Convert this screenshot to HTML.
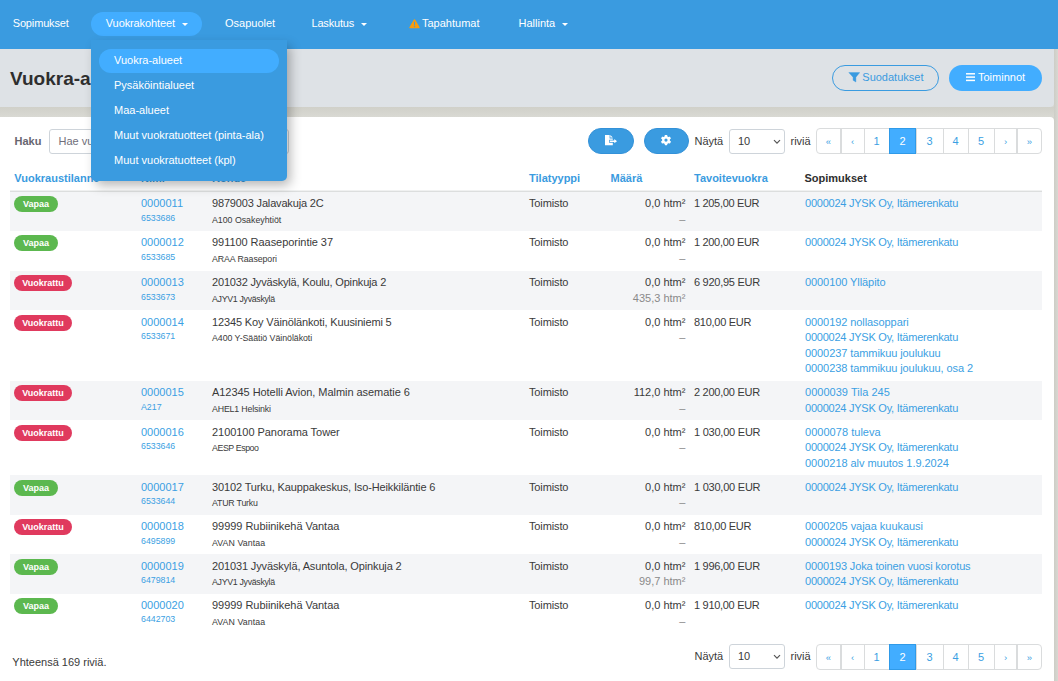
<!DOCTYPE html>
<html><head><meta charset="utf-8"><title>Vuokra-alueet</title>
<style>
html,body{margin:0;padding:0;}
body{width:1058px;height:681px;overflow:hidden;position:relative;background:#d5d5cf;font-family:"Liberation Sans", sans-serif;}
div{box-sizing:border-box;}
.caret{position:absolute;width:0;height:0;border-left:3px solid transparent;border-right:3px solid transparent;border-top:3px solid #fff;}
</style></head><body>

<div style="position:absolute;left:0;top:49px;width:1054px;height:58px;background:#dee2e6;border-bottom-right-radius:4px;"></div>
<div style="position:absolute;left:0;top:107px;width:1058px;height:10px;background:linear-gradient(#d0d0c9,#d9d9d3);"></div>
<div style="position:absolute;left:0;top:117px;width:1054px;height:600px;background:#fff;border-top-right-radius:4px;"></div>
<div style="position:absolute;left:1054px;top:49px;width:4px;height:633px;background:linear-gradient(90deg,#cdcdc6,#d8d8d2);"></div>
<div style="position:absolute;left:10.00px;top:64.92px;font-size:19px;line-height:27px;color:#2e2e2e;font-weight:bold;white-space:nowrap;">Vuokra-alueet</div>
<div style="position:absolute;left:832px;top:65px;width:107px;height:26px;border:1px solid #3a9be0;border-radius:13px;"></div>
<svg style="position:absolute;left:848px;top:72px" width="12" height="11" viewBox="0 0 12 11"><path d="M0.8 0.6 H11.7 L7.9 5.2 V10 L5.1 8.3 V5.2 Z" fill="#3a9be0" stroke="#3a9be0" stroke-width="0.4" stroke-linejoin="round"/></svg>
<div style="position:absolute;left:862.30px;top:70.19px;font-size:11px;line-height:15px;color:#3a9be0;font-weight:normal;white-space:nowrap;">Suodatukset</div>
<div style="position:absolute;left:949px;top:65px;width:93px;height:26px;background:#42adff;border-radius:13px;"></div>
<svg style="position:absolute;left:966px;top:68px" width="10" height="18" viewBox="0 0 10 18"><rect x="0" y="5.05" width="9" height="1.5" fill="#fff"/><rect x="0" y="8.35" width="9" height="1.5" fill="#fff"/><rect x="0" y="11.65" width="9" height="1.5" fill="#fff"/></svg>
<div style="position:absolute;left:978.00px;top:70.19px;font-size:11px;line-height:15px;color:#fff;font-weight:normal;white-space:nowrap;">Toiminnot</div>
<div style="position:absolute;left:14.50px;top:133.69px;font-size:11px;line-height:15px;color:#67656f;font-weight:bold;white-space:nowrap;">Haku</div>
<div style="position:absolute;left:49px;top:129px;width:240px;height:25px;border:1px solid #ced4da;border-radius:3px;background:#fff;"></div>
<div style="position:absolute;left:58.50px;top:133.69px;font-size:11px;line-height:15px;color:#6f6e7a;font-weight:normal;white-space:nowrap;">Hae vuokra-alueita</div>
<div style="position:absolute;left:588px;top:128px;width:46px;height:26px;background:#3a9be0;border-radius:13px;border:1px solid #3391d8;"></div>
<svg style="position:absolute;left:604px;top:134px" width="14" height="13" viewBox="0 0 14 13"><path d="M1 1 H5.6 V4.4 H8.8 V5.7 H5.1 V8.7 H8.8 V11.3 H1 Z" fill="#fff"/><path d="M6.3 1 L8.8 3.6 H6.3 Z" fill="#fff"/><path d="M5.8 6.6 H10.3 V5.1 L13 7.2 L10.3 9.3 V7.9 H5.8 Z" fill="#fff"/></svg>
<div style="position:absolute;left:644px;top:128px;width:45px;height:26px;background:#3a9be0;border-radius:13px;border:1px solid #3391d8;"></div>
<svg style="position:absolute;left:656px;top:130px" width="20" height="20" viewBox="0 0 20 20"><g transform="translate(10 10.1)" fill="#fff"><circle r="3.9"/><rect x="-1.25" y="-5.1" width="2.5" height="10.2" rx="0.4"/><rect x="-1.25" y="-5.1" width="2.5" height="10.2" rx="0.4" transform="rotate(60)"/><rect x="-1.25" y="-5.1" width="2.5" height="10.2" rx="0.4" transform="rotate(120)"/><circle r="1.6" fill="#3a9be0"/></g></svg>
<div style="position:absolute;left:694.50px;top:133.69px;font-size:11px;line-height:15px;color:#3a3a3a;font-weight:normal;white-space:nowrap;">Näytä</div><div style="position:absolute;left:729px;top:129px;width:56px;height:25px;border:1px solid #ced4da;border-radius:3px;background:#fff;"></div><div style="position:absolute;left:738.00px;top:133.69px;font-size:11px;line-height:15px;color:#3a3a3a;font-weight:normal;white-space:nowrap;">10</div><svg style="position:absolute;left:773px;top:138.5px" width="8" height="6" viewBox="0 0 8 6"><path d="M1 1.2 L4 4.2 L7 1.2" stroke="#555" stroke-width="1.2" fill="none"/></svg><div style="position:absolute;left:790.50px;top:133.69px;font-size:11px;line-height:15px;color:#3a3a3a;font-weight:normal;white-space:nowrap;">riviä</div><div style="position:absolute;left:816px;top:128px;width:226px;height:26px;border:1px solid #dadcdd;border-radius:4px;"></div><div style="position:absolute;left:816px;top:128.5px;width:25px;height:26px;line-height:26px;text-align:center;font-size:9.5px;color:#3b9fe3;">«</div><div style="position:absolute;left:840px;top:128px;width:2px;height:26px;background:#dadcdd;"></div><div style="position:absolute;left:841px;top:128.5px;width:23px;height:26px;line-height:26px;text-align:center;font-size:9.5px;color:#3b9fe3;">‹</div><div style="position:absolute;left:864px;top:128px;width:1px;height:26px;background:#dadcdd;"></div><div style="position:absolute;left:864px;top:128px;width:25px;height:26px;line-height:26px;text-align:center;font-size:11px;color:#3b9fe3;">1</div><div style="position:absolute;left:889px;top:128px;width:27px;height:26px;background:#42adff;border:1px solid #2f9ae8;"></div><div style="position:absolute;left:889px;top:128px;width:27px;height:26px;line-height:26px;text-align:center;font-size:11px;color:#fff;">2</div><div style="position:absolute;left:916px;top:128px;width:1px;height:26px;background:#dadcdd;"></div><div style="position:absolute;left:916px;top:128px;width:27px;height:26px;line-height:26px;text-align:center;font-size:11px;color:#3b9fe3;">3</div><div style="position:absolute;left:943px;top:128px;width:1px;height:26px;background:#dadcdd;"></div><div style="position:absolute;left:943px;top:128px;width:25px;height:26px;line-height:26px;text-align:center;font-size:11px;color:#3b9fe3;">4</div><div style="position:absolute;left:968px;top:128px;width:1px;height:26px;background:#dadcdd;"></div><div style="position:absolute;left:968px;top:128px;width:26px;height:26px;line-height:26px;text-align:center;font-size:11px;color:#3b9fe3;">5</div><div style="position:absolute;left:994px;top:128px;width:1px;height:26px;background:#dadcdd;"></div><div style="position:absolute;left:994px;top:128.5px;width:23px;height:26px;line-height:26px;text-align:center;font-size:9.5px;color:#3b9fe3;">›</div><div style="position:absolute;left:1016px;top:128px;width:2px;height:26px;background:#dadcdd;"></div><div style="position:absolute;left:1017px;top:128.5px;width:25px;height:26px;line-height:26px;text-align:center;font-size:9.5px;color:#3b9fe3;">»</div>
<div style="position:absolute;left:14.30px;top:170.69px;font-size:11px;line-height:15px;color:#3a9be0;font-weight:bold;white-space:nowrap;">Vuokraustilanne</div>
<div style="position:absolute;left:141.00px;top:170.69px;font-size:11px;line-height:15px;color:#3a9be0;font-weight:bold;white-space:nowrap;">Nimi</div>
<div style="position:absolute;left:212.00px;top:170.69px;font-size:11px;line-height:15px;color:#3a9be0;font-weight:bold;white-space:nowrap;">Kohde</div>
<div style="position:absolute;left:529.00px;top:170.69px;font-size:11px;line-height:15px;color:#3a9be0;font-weight:bold;white-space:nowrap;">Tilatyyppi</div>
<div style="position:absolute;left:610.60px;top:170.69px;font-size:11px;line-height:15px;color:#3a9be0;font-weight:bold;white-space:nowrap;">Määrä</div>
<div style="position:absolute;left:694.00px;top:170.69px;font-size:11px;line-height:15px;color:#3a9be0;font-weight:bold;white-space:nowrap;">Tavoitevuokra</div>
<div style="position:absolute;left:804.50px;top:170.69px;font-size:11px;line-height:15px;color:#2e2e2e;font-weight:bold;white-space:nowrap;">Sopimukset</div>
<div style="position:absolute;left:10px;top:190px;width:1032px;height:1px;background:#f0f1f1;"></div>
<div style="position:absolute;left:10px;top:191px;width:1032px;height:1px;background:#dcdede;"></div>
<div style="position:absolute;left:10px;top:192px;width:1032px;height:39px;background:#f4f5f7;"></div>
<div style="position:absolute;left:14px;top:196px;width:44px;height:16px;border-radius:8px;background:#5cb84f;color:#fff;font-size:9px;font-weight:bold;line-height:16px;text-align:center;">Vapaa</div>
<div style="position:absolute;left:141.00px;top:195.69px;font-size:11px;line-height:15px;color:#3b9fe3;font-weight:normal;white-space:nowrap;">0000011</div>
<div style="position:absolute;left:141.00px;top:211.95px;font-size:8.8px;line-height:12px;color:#3b9fe3;font-weight:normal;white-space:nowrap;">6533686</div>
<div style="position:absolute;left:212.00px;top:195.69px;font-size:11px;line-height:15px;color:#3a3a3a;font-weight:normal;white-space:nowrap;letter-spacing:-0.165px;">9879003 Jalavakuja 2C</div>
<div style="position:absolute;left:212.00px;top:213.95px;font-size:8.8px;line-height:12px;color:#3a3a3a;font-weight:normal;white-space:nowrap;letter-spacing:-0.016px;">A100 Osakeyhtiöt</div>
<div style="position:absolute;left:529.00px;top:195.69px;font-size:11px;line-height:15px;color:#3a3a3a;font-weight:normal;white-space:nowrap;letter-spacing:-0.130px;">Toimisto</div>
<div style="position:absolute;right:372.60px;top:195.69px;font-size:11px;line-height:15px;color:#3a3a3a;font-weight:normal;white-space:nowrap;">0,0 htm²</div>
<div style="position:absolute;right:372.60px;top:211.69px;font-size:11px;line-height:15px;color:#8a8a8a;font-weight:normal;white-space:nowrap;">–</div>
<div style="position:absolute;left:694.00px;top:195.69px;font-size:11px;line-height:15px;color:#3a3a3a;font-weight:normal;white-space:nowrap;letter-spacing:-0.325px;">1 205,00 EUR</div>
<div style="position:absolute;left:805.00px;top:195.69px;font-size:11px;line-height:15px;color:#3b9fe3;font-weight:normal;white-space:nowrap;letter-spacing:-0.241px;">0000024 JYSK Oy, Itämerenkatu</div>
<div style="position:absolute;left:14px;top:235px;width:44px;height:16px;border-radius:8px;background:#5cb84f;color:#fff;font-size:9px;font-weight:bold;line-height:16px;text-align:center;">Vapaa</div>
<div style="position:absolute;left:141.00px;top:234.69px;font-size:11px;line-height:15px;color:#3b9fe3;font-weight:normal;white-space:nowrap;">0000012</div>
<div style="position:absolute;left:141.00px;top:250.95px;font-size:8.8px;line-height:12px;color:#3b9fe3;font-weight:normal;white-space:nowrap;">6533685</div>
<div style="position:absolute;left:212.00px;top:234.69px;font-size:11px;line-height:15px;color:#3a3a3a;font-weight:normal;white-space:nowrap;letter-spacing:-0.048px;">991100 Raaseporintie 37</div>
<div style="position:absolute;left:212.00px;top:252.95px;font-size:8.8px;line-height:12px;color:#3a3a3a;font-weight:normal;white-space:nowrap;letter-spacing:-0.081px;">ARAA Raasepori</div>
<div style="position:absolute;left:529.00px;top:234.69px;font-size:11px;line-height:15px;color:#3a3a3a;font-weight:normal;white-space:nowrap;letter-spacing:-0.130px;">Toimisto</div>
<div style="position:absolute;right:372.60px;top:234.69px;font-size:11px;line-height:15px;color:#3a3a3a;font-weight:normal;white-space:nowrap;">0,0 htm²</div>
<div style="position:absolute;right:372.60px;top:250.69px;font-size:11px;line-height:15px;color:#8a8a8a;font-weight:normal;white-space:nowrap;">–</div>
<div style="position:absolute;left:694.00px;top:234.69px;font-size:11px;line-height:15px;color:#3a3a3a;font-weight:normal;white-space:nowrap;letter-spacing:-0.325px;">1 200,00 EUR</div>
<div style="position:absolute;left:805.00px;top:234.69px;font-size:11px;line-height:15px;color:#3b9fe3;font-weight:normal;white-space:nowrap;letter-spacing:-0.241px;">0000024 JYSK Oy, Itämerenkatu</div>
<div style="position:absolute;left:10px;top:271px;width:1032px;height:39px;background:#f4f5f7;"></div>
<div style="position:absolute;left:14px;top:275px;width:58px;height:16px;border-radius:8px;background:#e03a5e;color:#fff;font-size:9px;font-weight:bold;line-height:16px;text-align:center;">Vuokrattu</div>
<div style="position:absolute;left:141.00px;top:274.69px;font-size:11px;line-height:15px;color:#3b9fe3;font-weight:normal;white-space:nowrap;">0000013</div>
<div style="position:absolute;left:141.00px;top:290.95px;font-size:8.8px;line-height:12px;color:#3b9fe3;font-weight:normal;white-space:nowrap;">6533673</div>
<div style="position:absolute;left:212.00px;top:274.69px;font-size:11px;line-height:15px;color:#3a3a3a;font-weight:normal;white-space:nowrap;letter-spacing:-0.180px;">201032 Jyväskylä, Koulu, Opinkuja 2</div>
<div style="position:absolute;left:212.00px;top:292.95px;font-size:8.8px;line-height:12px;color:#3a3a3a;font-weight:normal;white-space:nowrap;letter-spacing:-0.313px;">AJYV1 Jyväskylä</div>
<div style="position:absolute;left:529.00px;top:274.69px;font-size:11px;line-height:15px;color:#3a3a3a;font-weight:normal;white-space:nowrap;letter-spacing:-0.130px;">Toimisto</div>
<div style="position:absolute;right:372.60px;top:274.69px;font-size:11px;line-height:15px;color:#3a3a3a;font-weight:normal;white-space:nowrap;">0,0 htm²</div>
<div style="position:absolute;right:372.60px;top:290.69px;font-size:11px;line-height:15px;color:#8a8a8a;font-weight:normal;white-space:nowrap;">435,3 htm²</div>
<div style="position:absolute;left:694.00px;top:274.69px;font-size:11px;line-height:15px;color:#3a3a3a;font-weight:normal;white-space:nowrap;letter-spacing:-0.275px;">6 920,95 EUR</div>
<div style="position:absolute;left:805.00px;top:274.69px;font-size:11px;line-height:15px;color:#3b9fe3;font-weight:normal;white-space:nowrap;letter-spacing:-0.077px;">0000100 Ylläpito</div>
<div style="position:absolute;left:14px;top:315px;width:58px;height:16px;border-radius:8px;background:#e03a5e;color:#fff;font-size:9px;font-weight:bold;line-height:16px;text-align:center;">Vuokrattu</div>
<div style="position:absolute;left:141.00px;top:314.69px;font-size:11px;line-height:15px;color:#3b9fe3;font-weight:normal;white-space:nowrap;">0000014</div>
<div style="position:absolute;left:141.00px;top:329.95px;font-size:8.8px;line-height:12px;color:#3b9fe3;font-weight:normal;white-space:nowrap;">6533671</div>
<div style="position:absolute;left:212.00px;top:314.69px;font-size:11px;line-height:15px;color:#3a3a3a;font-weight:normal;white-space:nowrap;letter-spacing:-0.141px;">12345 Koy Väinölänkoti, Kuusiniemi 5</div>
<div style="position:absolute;left:212.00px;top:331.95px;font-size:8.8px;line-height:12px;color:#3a3a3a;font-weight:normal;white-space:nowrap;letter-spacing:-0.043px;">A400 Y-Säätiö Väinöläkoti</div>
<div style="position:absolute;left:529.00px;top:314.69px;font-size:11px;line-height:15px;color:#3a3a3a;font-weight:normal;white-space:nowrap;letter-spacing:-0.130px;">Toimisto</div>
<div style="position:absolute;right:372.60px;top:314.69px;font-size:11px;line-height:15px;color:#3a3a3a;font-weight:normal;white-space:nowrap;">0,0 htm²</div>
<div style="position:absolute;right:372.60px;top:329.69px;font-size:11px;line-height:15px;color:#8a8a8a;font-weight:normal;white-space:nowrap;">–</div>
<div style="position:absolute;left:694.00px;top:314.69px;font-size:11px;line-height:15px;color:#3a3a3a;font-weight:normal;white-space:nowrap;letter-spacing:-0.273px;">810,00 EUR</div>
<div style="position:absolute;left:805.00px;top:314.69px;font-size:11px;line-height:15px;color:#3b9fe3;font-weight:normal;white-space:nowrap;letter-spacing:-0.079px;">0000192 nollasoppari</div>
<div style="position:absolute;left:805.00px;top:329.69px;font-size:11px;line-height:15px;color:#3b9fe3;font-weight:normal;white-space:nowrap;letter-spacing:-0.241px;">0000024 JYSK Oy, Itämerenkatu</div>
<div style="position:absolute;left:805.00px;top:345.69px;font-size:11px;line-height:15px;color:#3b9fe3;font-weight:normal;white-space:nowrap;letter-spacing:-0.083px;">0000237 tammikuu joulukuu</div>
<div style="position:absolute;left:805.00px;top:360.69px;font-size:11px;line-height:15px;color:#3b9fe3;font-weight:normal;white-space:nowrap;letter-spacing:-0.082px;">0000238 tammikuu joulukuu, osa 2</div>
<div style="position:absolute;left:10px;top:381px;width:1032px;height:39px;background:#f4f5f7;"></div>
<div style="position:absolute;left:14px;top:385px;width:58px;height:16px;border-radius:8px;background:#e03a5e;color:#fff;font-size:9px;font-weight:bold;line-height:16px;text-align:center;">Vuokrattu</div>
<div style="position:absolute;left:141.00px;top:384.69px;font-size:11px;line-height:15px;color:#3b9fe3;font-weight:normal;white-space:nowrap;">0000015</div>
<div style="position:absolute;left:141.00px;top:400.95px;font-size:8.8px;line-height:12px;color:#3b9fe3;font-weight:normal;white-space:nowrap;">A217</div>
<div style="position:absolute;left:212.00px;top:384.69px;font-size:11px;line-height:15px;color:#3a3a3a;font-weight:normal;white-space:nowrap;letter-spacing:-0.050px;">A12345 Hotelli Avion, Malmin asematie 6</div>
<div style="position:absolute;left:212.00px;top:402.95px;font-size:8.8px;line-height:12px;color:#3a3a3a;font-weight:normal;white-space:nowrap;letter-spacing:-0.160px;">AHEL1 Helsinki</div>
<div style="position:absolute;left:529.00px;top:384.69px;font-size:11px;line-height:15px;color:#3a3a3a;font-weight:normal;white-space:nowrap;letter-spacing:-0.130px;">Toimisto</div>
<div style="position:absolute;right:372.60px;top:384.69px;font-size:11px;line-height:15px;color:#3a3a3a;font-weight:normal;white-space:nowrap;">112,0 htm²</div>
<div style="position:absolute;right:372.60px;top:400.69px;font-size:11px;line-height:15px;color:#8a8a8a;font-weight:normal;white-space:nowrap;">–</div>
<div style="position:absolute;left:694.00px;top:384.69px;font-size:11px;line-height:15px;color:#3a3a3a;font-weight:normal;white-space:nowrap;letter-spacing:-0.275px;">2 200,00 EUR</div>
<div style="position:absolute;left:805.00px;top:384.69px;font-size:11px;line-height:15px;color:#3b9fe3;font-weight:normal;white-space:nowrap;letter-spacing:0.025px;">0000039 Tila 245</div>
<div style="position:absolute;left:805.00px;top:400.69px;font-size:11px;line-height:15px;color:#3b9fe3;font-weight:normal;white-space:nowrap;letter-spacing:-0.241px;">0000024 JYSK Oy, Itämerenkatu</div>
<div style="position:absolute;left:14px;top:425px;width:58px;height:16px;border-radius:8px;background:#e03a5e;color:#fff;font-size:9px;font-weight:bold;line-height:16px;text-align:center;">Vuokrattu</div>
<div style="position:absolute;left:141.00px;top:424.69px;font-size:11px;line-height:15px;color:#3b9fe3;font-weight:normal;white-space:nowrap;">0000016</div>
<div style="position:absolute;left:141.00px;top:439.95px;font-size:8.8px;line-height:12px;color:#3b9fe3;font-weight:normal;white-space:nowrap;">6533646</div>
<div style="position:absolute;left:212.00px;top:424.69px;font-size:11px;line-height:15px;color:#3a3a3a;font-weight:normal;white-space:nowrap;letter-spacing:-0.051px;">2100100 Panorama Tower</div>
<div style="position:absolute;left:212.00px;top:441.95px;font-size:8.8px;line-height:12px;color:#3a3a3a;font-weight:normal;white-space:nowrap;letter-spacing:-0.412px;">AESP Espoo</div>
<div style="position:absolute;left:529.00px;top:424.69px;font-size:11px;line-height:15px;color:#3a3a3a;font-weight:normal;white-space:nowrap;letter-spacing:-0.130px;">Toimisto</div>
<div style="position:absolute;right:372.60px;top:424.69px;font-size:11px;line-height:15px;color:#3a3a3a;font-weight:normal;white-space:nowrap;">0,0 htm²</div>
<div style="position:absolute;right:372.60px;top:439.69px;font-size:11px;line-height:15px;color:#8a8a8a;font-weight:normal;white-space:nowrap;">–</div>
<div style="position:absolute;left:694.00px;top:424.69px;font-size:11px;line-height:15px;color:#3a3a3a;font-weight:normal;white-space:nowrap;letter-spacing:-0.233px;">1 030,00 EUR</div>
<div style="position:absolute;left:805.00px;top:424.69px;font-size:11px;line-height:15px;color:#3b9fe3;font-weight:normal;white-space:nowrap;letter-spacing:0.033px;">0000078 tuleva</div>
<div style="position:absolute;left:805.00px;top:439.69px;font-size:11px;line-height:15px;color:#3b9fe3;font-weight:normal;white-space:nowrap;letter-spacing:-0.241px;">0000024 JYSK Oy, Itämerenkatu</div>
<div style="position:absolute;left:805.00px;top:455.69px;font-size:11px;line-height:15px;color:#3b9fe3;font-weight:normal;white-space:nowrap;letter-spacing:-0.042px;">0000218 alv muutos 1.9.2024</div>
<div style="position:absolute;left:10px;top:475px;width:1032px;height:40px;background:#f4f5f7;"></div>
<div style="position:absolute;left:14px;top:480px;width:44px;height:16px;border-radius:8px;background:#5cb84f;color:#fff;font-size:9px;font-weight:bold;line-height:16px;text-align:center;">Vapaa</div>
<div style="position:absolute;left:141.00px;top:479.69px;font-size:11px;line-height:15px;color:#3b9fe3;font-weight:normal;white-space:nowrap;">0000017</div>
<div style="position:absolute;left:141.00px;top:494.95px;font-size:8.8px;line-height:12px;color:#3b9fe3;font-weight:normal;white-space:nowrap;">6533644</div>
<div style="position:absolute;left:212.00px;top:479.69px;font-size:11px;line-height:15px;color:#3a3a3a;font-weight:normal;white-space:nowrap;letter-spacing:-0.133px;">30102 Turku, Kauppakeskus, Iso-Heikkiläntie 6</div>
<div style="position:absolute;left:212.00px;top:496.95px;font-size:8.8px;line-height:12px;color:#3a3a3a;font-weight:normal;white-space:nowrap;letter-spacing:-0.206px;">ATUR Turku</div>
<div style="position:absolute;left:529.00px;top:479.69px;font-size:11px;line-height:15px;color:#3a3a3a;font-weight:normal;white-space:nowrap;letter-spacing:-0.130px;">Toimisto</div>
<div style="position:absolute;right:372.60px;top:479.69px;font-size:11px;line-height:15px;color:#3a3a3a;font-weight:normal;white-space:nowrap;">0,0 htm²</div>
<div style="position:absolute;right:372.60px;top:494.69px;font-size:11px;line-height:15px;color:#8a8a8a;font-weight:normal;white-space:nowrap;">–</div>
<div style="position:absolute;left:694.00px;top:479.69px;font-size:11px;line-height:15px;color:#3a3a3a;font-weight:normal;white-space:nowrap;letter-spacing:-0.233px;">1 030,00 EUR</div>
<div style="position:absolute;left:805.00px;top:479.69px;font-size:11px;line-height:15px;color:#3b9fe3;font-weight:normal;white-space:nowrap;letter-spacing:-0.241px;">0000024 JYSK Oy, Itämerenkatu</div>
<div style="position:absolute;left:14px;top:519px;width:58px;height:16px;border-radius:8px;background:#e03a5e;color:#fff;font-size:9px;font-weight:bold;line-height:16px;text-align:center;">Vuokrattu</div>
<div style="position:absolute;left:141.00px;top:518.69px;font-size:11px;line-height:15px;color:#3b9fe3;font-weight:normal;white-space:nowrap;">0000018</div>
<div style="position:absolute;left:141.00px;top:534.95px;font-size:8.8px;line-height:12px;color:#3b9fe3;font-weight:normal;white-space:nowrap;">6495899</div>
<div style="position:absolute;left:212.00px;top:518.69px;font-size:11px;line-height:15px;color:#3a3a3a;font-weight:normal;white-space:nowrap;letter-spacing:-0.039px;">99999 Rubiinikehä Vantaa</div>
<div style="position:absolute;left:212.00px;top:536.95px;font-size:8.8px;line-height:12px;color:#3a3a3a;font-weight:normal;white-space:nowrap;letter-spacing:0.087px;">AVAN Vantaa</div>
<div style="position:absolute;left:529.00px;top:518.69px;font-size:11px;line-height:15px;color:#3a3a3a;font-weight:normal;white-space:nowrap;letter-spacing:-0.130px;">Toimisto</div>
<div style="position:absolute;right:372.60px;top:518.69px;font-size:11px;line-height:15px;color:#3a3a3a;font-weight:normal;white-space:nowrap;">0,0 htm²</div>
<div style="position:absolute;right:372.60px;top:534.69px;font-size:11px;line-height:15px;color:#8a8a8a;font-weight:normal;white-space:nowrap;">–</div>
<div style="position:absolute;left:694.00px;top:518.69px;font-size:11px;line-height:15px;color:#3a3a3a;font-weight:normal;white-space:nowrap;letter-spacing:-0.273px;">810,00 EUR</div>
<div style="position:absolute;left:805.00px;top:518.69px;font-size:11px;line-height:15px;color:#3b9fe3;font-weight:normal;white-space:nowrap;letter-spacing:-0.029px;">0000205 vajaa kuukausi</div>
<div style="position:absolute;left:805.00px;top:534.69px;font-size:11px;line-height:15px;color:#3b9fe3;font-weight:normal;white-space:nowrap;letter-spacing:-0.241px;">0000024 JYSK Oy, Itämerenkatu</div>
<div style="position:absolute;left:10px;top:554px;width:1032px;height:40px;background:#f4f5f7;"></div>
<div style="position:absolute;left:14px;top:559px;width:44px;height:16px;border-radius:8px;background:#5cb84f;color:#fff;font-size:9px;font-weight:bold;line-height:16px;text-align:center;">Vapaa</div>
<div style="position:absolute;left:141.00px;top:558.69px;font-size:11px;line-height:15px;color:#3b9fe3;font-weight:normal;white-space:nowrap;">0000019</div>
<div style="position:absolute;left:141.00px;top:573.95px;font-size:8.8px;line-height:12px;color:#3b9fe3;font-weight:normal;white-space:nowrap;">6479814</div>
<div style="position:absolute;left:212.00px;top:558.69px;font-size:11px;line-height:15px;color:#3a3a3a;font-weight:normal;white-space:nowrap;letter-spacing:-0.128px;">201031 Jyväskylä, Asuntola, Opinkuja 2</div>
<div style="position:absolute;left:212.00px;top:575.95px;font-size:8.8px;line-height:12px;color:#3a3a3a;font-weight:normal;white-space:nowrap;letter-spacing:-0.313px;">AJYV1 Jyväskylä</div>
<div style="position:absolute;left:529.00px;top:558.69px;font-size:11px;line-height:15px;color:#3a3a3a;font-weight:normal;white-space:nowrap;letter-spacing:-0.130px;">Toimisto</div>
<div style="position:absolute;right:372.60px;top:558.69px;font-size:11px;line-height:15px;color:#3a3a3a;font-weight:normal;white-space:nowrap;">0,0 htm²</div>
<div style="position:absolute;right:372.60px;top:573.69px;font-size:11px;line-height:15px;color:#8a8a8a;font-weight:normal;white-space:nowrap;">99,7 htm²</div>
<div style="position:absolute;left:694.00px;top:558.69px;font-size:11px;line-height:15px;color:#3a3a3a;font-weight:normal;white-space:nowrap;letter-spacing:-0.275px;">1 996,00 EUR</div>
<div style="position:absolute;left:805.00px;top:558.69px;font-size:11px;line-height:15px;color:#3b9fe3;font-weight:normal;white-space:nowrap;letter-spacing:-0.137px;">0000193 Joka toinen vuosi korotus</div>
<div style="position:absolute;left:805.00px;top:573.69px;font-size:11px;line-height:15px;color:#3b9fe3;font-weight:normal;white-space:nowrap;letter-spacing:-0.241px;">0000024 JYSK Oy, Itämerenkatu</div>
<div style="position:absolute;left:14px;top:598px;width:44px;height:16px;border-radius:8px;background:#5cb84f;color:#fff;font-size:9px;font-weight:bold;line-height:16px;text-align:center;">Vapaa</div>
<div style="position:absolute;left:141.00px;top:597.69px;font-size:11px;line-height:15px;color:#3b9fe3;font-weight:normal;white-space:nowrap;">0000020</div>
<div style="position:absolute;left:141.00px;top:612.95px;font-size:8.8px;line-height:12px;color:#3b9fe3;font-weight:normal;white-space:nowrap;">6442703</div>
<div style="position:absolute;left:212.00px;top:597.69px;font-size:11px;line-height:15px;color:#3a3a3a;font-weight:normal;white-space:nowrap;letter-spacing:-0.039px;">99999 Rubiinikehä Vantaa</div>
<div style="position:absolute;left:212.00px;top:615.95px;font-size:8.8px;line-height:12px;color:#3a3a3a;font-weight:normal;white-space:nowrap;letter-spacing:0.087px;">AVAN Vantaa</div>
<div style="position:absolute;left:529.00px;top:597.69px;font-size:11px;line-height:15px;color:#3a3a3a;font-weight:normal;white-space:nowrap;letter-spacing:-0.130px;">Toimisto</div>
<div style="position:absolute;right:372.60px;top:597.69px;font-size:11px;line-height:15px;color:#3a3a3a;font-weight:normal;white-space:nowrap;">0,0 htm²</div>
<div style="position:absolute;right:372.60px;top:613.69px;font-size:11px;line-height:15px;color:#8a8a8a;font-weight:normal;white-space:nowrap;">–</div>
<div style="position:absolute;left:694.00px;top:597.69px;font-size:11px;line-height:15px;color:#3a3a3a;font-weight:normal;white-space:nowrap;letter-spacing:-0.300px;">1 910,00 EUR</div>
<div style="position:absolute;left:805.00px;top:597.69px;font-size:11px;line-height:15px;color:#3b9fe3;font-weight:normal;white-space:nowrap;letter-spacing:-0.241px;">0000024 JYSK Oy, Itämerenkatu</div>
<div style="position:absolute;left:12.30px;top:654.69px;font-size:11px;line-height:15px;color:#3a3a3a;font-weight:normal;white-space:nowrap;">Yhteensä 169 riviä.</div>
<div style="position:absolute;left:694.50px;top:648.69px;font-size:11px;line-height:15px;color:#3a3a3a;font-weight:normal;white-space:nowrap;">Näytä</div><div style="position:absolute;left:729px;top:644px;width:56px;height:25px;border:1px solid #ced4da;border-radius:3px;background:#fff;"></div><div style="position:absolute;left:738.00px;top:648.69px;font-size:11px;line-height:15px;color:#3a3a3a;font-weight:normal;white-space:nowrap;">10</div><svg style="position:absolute;left:773px;top:653.5px" width="8" height="6" viewBox="0 0 8 6"><path d="M1 1.2 L4 4.2 L7 1.2" stroke="#555" stroke-width="1.2" fill="none"/></svg><div style="position:absolute;left:790.50px;top:648.69px;font-size:11px;line-height:15px;color:#3a3a3a;font-weight:normal;white-space:nowrap;">riviä</div><div style="position:absolute;left:816px;top:644px;width:226px;height:26px;border:1px solid #dadcdd;border-radius:4px;"></div><div style="position:absolute;left:816px;top:644.5px;width:25px;height:26px;line-height:26px;text-align:center;font-size:9.5px;color:#3b9fe3;">«</div><div style="position:absolute;left:840px;top:644px;width:2px;height:26px;background:#dadcdd;"></div><div style="position:absolute;left:841px;top:644.5px;width:23px;height:26px;line-height:26px;text-align:center;font-size:9.5px;color:#3b9fe3;">‹</div><div style="position:absolute;left:864px;top:644px;width:1px;height:26px;background:#dadcdd;"></div><div style="position:absolute;left:864px;top:644px;width:25px;height:26px;line-height:26px;text-align:center;font-size:11px;color:#3b9fe3;">1</div><div style="position:absolute;left:889px;top:644px;width:27px;height:26px;background:#42adff;border:1px solid #2f9ae8;"></div><div style="position:absolute;left:889px;top:644px;width:27px;height:26px;line-height:26px;text-align:center;font-size:11px;color:#fff;">2</div><div style="position:absolute;left:916px;top:644px;width:1px;height:26px;background:#dadcdd;"></div><div style="position:absolute;left:916px;top:644px;width:27px;height:26px;line-height:26px;text-align:center;font-size:11px;color:#3b9fe3;">3</div><div style="position:absolute;left:943px;top:644px;width:1px;height:26px;background:#dadcdd;"></div><div style="position:absolute;left:943px;top:644px;width:25px;height:26px;line-height:26px;text-align:center;font-size:11px;color:#3b9fe3;">4</div><div style="position:absolute;left:968px;top:644px;width:1px;height:26px;background:#dadcdd;"></div><div style="position:absolute;left:968px;top:644px;width:26px;height:26px;line-height:26px;text-align:center;font-size:11px;color:#3b9fe3;">5</div><div style="position:absolute;left:994px;top:644px;width:1px;height:26px;background:#dadcdd;"></div><div style="position:absolute;left:994px;top:644.5px;width:23px;height:26px;line-height:26px;text-align:center;font-size:9.5px;color:#3b9fe3;">›</div><div style="position:absolute;left:1016px;top:644px;width:2px;height:26px;background:#dadcdd;"></div><div style="position:absolute;left:1017px;top:644.5px;width:25px;height:26px;line-height:26px;text-align:center;font-size:9.5px;color:#3b9fe3;">»</div>
<div style="position:absolute;left:0;top:0;width:1058px;height:49px;background:#3a9be0;"></div>
<div style="position:absolute;left:12.70px;top:15.89px;font-size:11px;line-height:15px;color:#fff;font-weight:normal;white-space:nowrap;letter-spacing:-0.144px;">Sopimukset</div>
<div style="position:absolute;left:91px;top:12px;width:111px;height:24px;border-radius:12px;background:#42adff;"></div>
<div style="position:absolute;left:105.80px;top:15.89px;font-size:11px;line-height:15px;color:#fff;font-weight:normal;white-space:nowrap;letter-spacing:-0.103px;">Vuokrakohteet</div>
<div class="caret" style="left:182px;top:23px;"></div>
<div style="position:absolute;left:225.00px;top:15.89px;font-size:11px;line-height:15px;color:#fff;font-weight:normal;white-space:nowrap;">Osapuolet</div>
<div style="position:absolute;left:311.50px;top:15.89px;font-size:11px;line-height:15px;color:#fff;font-weight:normal;white-space:nowrap;letter-spacing:-0.187px;">Laskutus</div>
<div class="caret" style="left:361px;top:23px;"></div>
<svg style="position:absolute;left:409px;top:18.5px" width="11" height="10" viewBox="0 0 11 10"><path d="M4.6 0.9 Q5 0.2 5.5 0.2 Q6 0.2 6.4 0.9 L10.6 8.3 Q11 9.3 10 9.3 H1 Q0 9.3 0.4 8.3 Z" fill="#f99c0c"/><path d="M4.9 2.8 H6.1 L5.85 6.4 H5.15 Z" fill="#3a9be0"/><circle cx="5.5" cy="7.6" r="0.65" fill="#3a9be0"/></svg>
<div style="position:absolute;left:422.00px;top:15.89px;font-size:11px;line-height:15px;color:#fff;font-weight:normal;white-space:nowrap;">Tapahtumat</div>
<div style="position:absolute;left:518.50px;top:15.89px;font-size:11px;line-height:15px;color:#fff;font-weight:normal;white-space:nowrap;">Hallinta</div>
<div class="caret" style="left:562px;top:23px;"></div>
<div style="position:absolute;left:91px;top:40px;width:196px;height:141px;background:#3a9be0;border-radius:0 0 5px 5px;box-shadow:4px 5px 12px -1px rgba(0,0,0,0.3);"></div>
<div style="position:absolute;left:99px;top:49px;width:180px;height:24px;border-radius:12px;background:#42adff;"></div>
<div style="position:absolute;left:114.00px;top:52.69px;font-size:11px;line-height:15px;color:#fff;font-weight:normal;white-space:nowrap;">Vuokra-alueet</div>
<div style="position:absolute;left:114.00px;top:77.89px;font-size:11px;line-height:15px;color:#fff;font-weight:normal;white-space:nowrap;">Pysäköintialueet</div>
<div style="position:absolute;left:114.00px;top:103.09px;font-size:11px;line-height:15px;color:#fff;font-weight:normal;white-space:nowrap;">Maa-alueet</div>
<div style="position:absolute;left:114.00px;top:128.29px;font-size:11px;line-height:15px;color:#fff;font-weight:normal;white-space:nowrap;">Muut vuokratuotteet (pinta-ala)</div>
<div style="position:absolute;left:114.00px;top:153.49px;font-size:11px;line-height:15px;color:#fff;font-weight:normal;white-space:nowrap;">Muut vuokratuotteet (kpl)</div>
</body></html>
